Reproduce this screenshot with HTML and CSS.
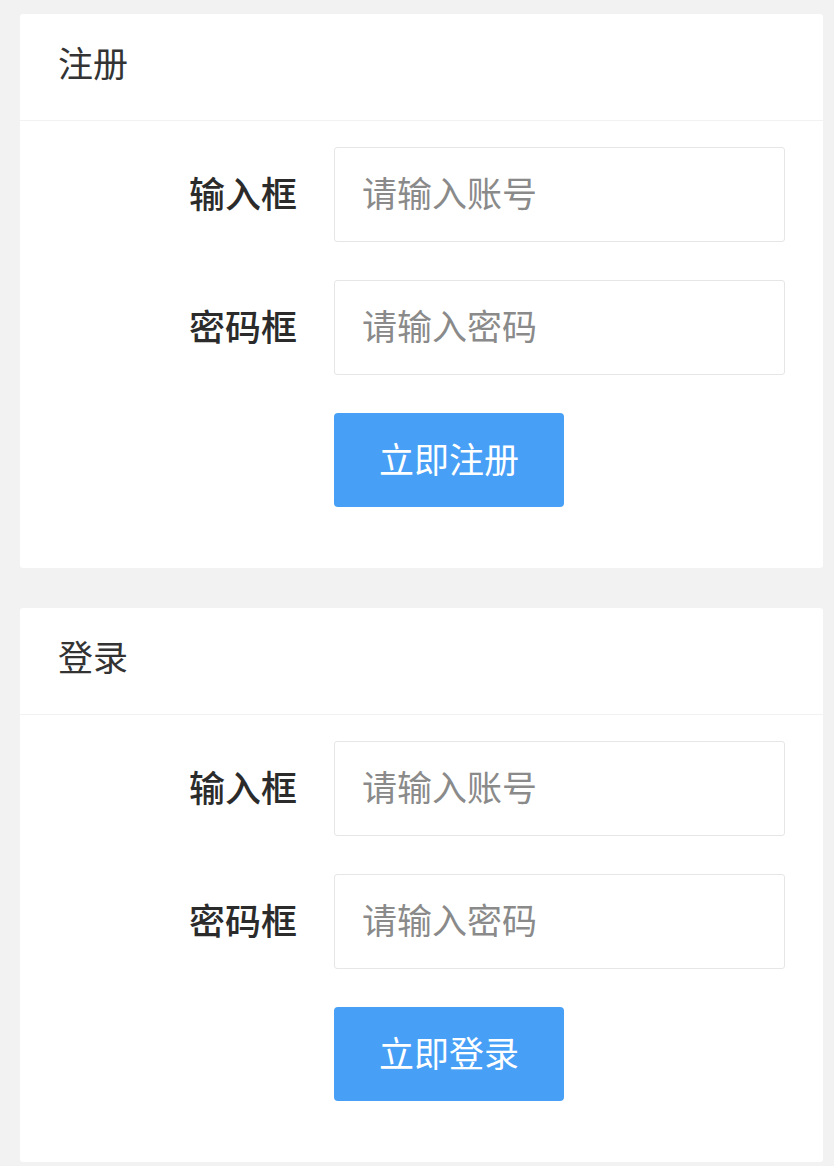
FILE: index.html
```html
<!DOCTYPE html>
<html lang="zh-CN">
<head>
  <meta charset="UTF-8">
  <title>注册 / 登录</title>
  <link rel="stylesheet" href="styles.css">
</head>
<body>

	<div class="card">
		<div class="card-header">注册</div>
		<form class="card-body">
			<div class="form-item">
				<label class="form-label" for="regUser">输入框</label>
				<input class="form-input" type="text" id="regUser" placeholder="请输入账号">
			</div>
			<div class="form-item">
				<label class="form-label" for="regPass">密码框</label>
				<input class="form-input" type="password" id="regPass" placeholder="请输入密码">
			</div>
			<div class="form-item">
				<button class="btn" type="submit">立即注册</button>
			</div>
		</form>
	</div>

	<div class="card">
		<div class="card-header">登录</div>
		<form class="card-body">
			<div class="form-item">
				<label class="form-label" for="logUser">输入框</label>
				<input class="form-input" type="text" id="logUser" placeholder="请输入账号">
			</div>
			<div class="form-item">
				<label class="form-label" for="logPass">密码框</label>
				<input class="form-input" type="password" id="logPass" placeholder="请输入密码">
			</div>
			<div class="form-item">
				<button class="btn" type="submit">立即登录</button>
			</div>
		</form>
	</div>

</body>
</html>
```

FILE: styles.css
```css
body{
	margin: 0;
	padding: 14px 11px 0 20px;
	background: #f2f2f2;
	font-family: "Noto Sans CJK SC", "Noto Sans", sans-serif;
	color: #333;
}

.card{
	background: #fff;
	border-radius: 3px;
	margin-bottom: 40px;
}

.card-header{
	height: 106px;
	line-height: 96px;
	padding-left: 38px;
	font-size: 35px;
	color: #333;
	border-bottom: 1px solid #f2f2f2;
}

.card-body{
	display: grid;
	gap: 38px;
	padding: 26px 0 61px;
	margin: 0;
}

.form-item{
	display: flex;
	align-items: center;
}

.form-label{
	width: 277px;
	padding-right: 37px;
	padding-bottom: 6px;
	text-align: right;
	font-size: 36px;
	font-weight: 500;
	color: #2b2b2b;
}

.form-input{
	box-sizing: border-box;
	width: 451px;
	height: 95px;
	padding: 0 0 6px 27px;
	border: 1px solid #e6e6e6;
	border-radius: 3px;
	font-family: inherit;
	font-size: 35px;
	color: #333;
	outline: none;
}
.form-input::placeholder{
	color: #8a8a8a;
}

.btn{
	margin-left: 314px;
	width: 230px;
	height: 94px;
	padding-bottom: 6px;
	border: none;
	border-radius: 4px;
	background: #489ff6;
	color: #fff;
	font-family: inherit;
	font-size: 35px;
	cursor: pointer;
}
```
